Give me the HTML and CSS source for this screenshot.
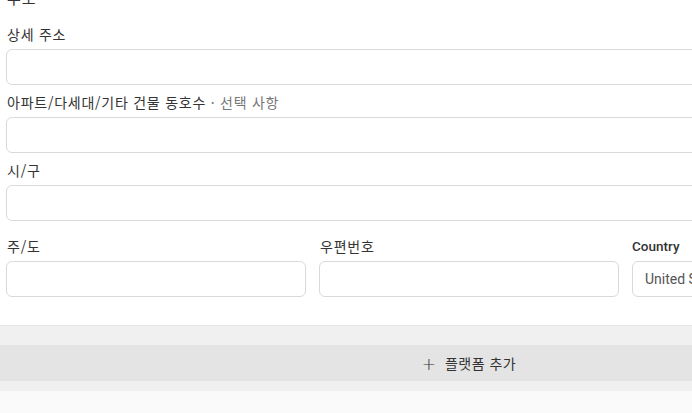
FILE: index.html
```html
<!DOCTYPE html>
<html lang="ko">
<head>
    <meta charset="UTF-8">
    <meta name="viewport" content="width=device-width, initial-scale=1.0">
    <title>주소</title>
    <link rel="stylesheet" href="styles.css">
</head>
<body>
    <div class="page">
        <form class="card">
            <h2 class="section-title">주소</h2>

            <div class="field">
                <label for="address2">상세 주소</label>
                <input type="text" id="address2">
            </div>

            <div class="field">
                <label for="apt">아파트/다세대/기타 건물 동호수<span class="optional"> · 선택 사항</span></label>
                <input type="text" id="apt">
            </div>

            <div class="field">
                <label for="city">시/구</label>
                <input type="text" id="city">
            </div>

            <div class="row">
                <div class="field">
                    <label for="state">주/도</label>
                    <input type="text" id="state">
                </div>
                <div class="field">
                    <label for="zip">우편번호</label>
                    <input type="text" id="zip">
                </div>
                <div class="field">
                    <label for="country" class="latin">Country</label>
                    <input type="text" id="country" class="latin" value="United States">
                </div>
            </div>
        </form>

        <div class="add-bar">
            <button type="button" class="add-btn"><span class="plus">+</span> 플랫폼 추가</button>
        </div>
    </div>
</body>
</html>
```

FILE: styles.css
```css
body { margin: 0; background: #fafafa; font-family: "Noto Sans CJK KR", "Noto Sans", sans-serif; color: #333; overflow: hidden; }
.page { width: 938px; }
.card { background: #fff; padding: 0 6px 28px; margin-top: -12px; box-shadow: 0 1px 1px rgba(0,0,0,0.06); border-bottom: 1px solid #e6e6e6; }
.section-title { margin: 0 0 17px 1px; font-size: 15px; line-height: 20px; font-weight: 400; color: #333; letter-spacing: 1px; }
.field { display: flex; flex-direction: column; margin-bottom: 8px; }
.field label { font-size: 14px; line-height: 18px; letter-spacing: 0.75px; margin: 0 0 6px 1px; color: #333; }
.optional { color: #777; }
.field input { height: 36px; box-sizing: border-box; border: 1px solid #d9d9d9; border-radius: 6px; padding: 0 12px; font-size: 14px; color: #555; background: #fff; outline: none; }
.row { display: grid; grid-template-columns: repeat(3, 1fr); gap: 13px; margin-top: 16px; }
.row .field { margin-bottom: 0; }
.latin { font-family: Roboto, "Noto Sans", sans-serif; }
.field label.latin { font-weight: 500; font-size: 13.5px; letter-spacing: 0; margin-left: 0; color: #333; }
.add-bar { background: #f0f0f0; padding: 19px 0 10px; }
.add-btn { display: block; width: 100%; height: 36px; border: none; background: #e4e4e4; color: #333; font-family: "Noto Sans CJK KR", sans-serif; font-size: 14px; letter-spacing: 0.5px; cursor: pointer; }
.plus { font-size: 17px; font-weight: 300; vertical-align: -1px; margin-right: 4px; font-family: "DejaVu Sans", sans-serif; }
```
